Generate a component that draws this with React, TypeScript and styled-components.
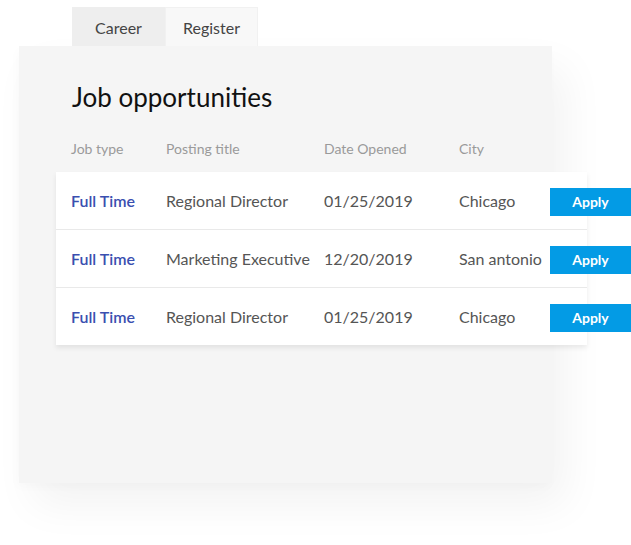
import React from "react";
import styled, { createGlobalStyle } from "styled-components";

const Global = createGlobalStyle`
  html, body { margin: 0; padding: 0; background: #ffffff; }
  body { font-family: Lato, "Open Sans", sans-serif; overflow: hidden; }
`;

const Page = styled.div`
  width: 631px;
  height: 545px;
  padding: 7px 0 0 19px;
  box-sizing: border-box;
  overflow: hidden;
`;

const Tabs = styled.div`
  display: flex;
  margin-left: 53px;
`;

const Tab = styled.div<{ $active?: boolean }>`
  width: 93px;
  height: 39px;
  display: flex;
  align-items: center;
  justify-content: center;
  font-size: 16px;
  color: #444;
  box-sizing: border-box;
  background: ${(p) => (p.$active ? "#eeeeee" : "#f8f8f8")};
  border: 1px solid ${(p) => (p.$active ? "#eeeeee" : "#f1f1f1")};
  border-bottom: none;
`;

const Panel = styled.div`
  width: 533px;
  height: 437px;
  background: #f5f5f5;
  box-shadow: 14px 22px 40px rgba(0, 0, 0, 0.05), -2px 4px 10px rgba(0, 0, 0, 0.02);
  padding: 35px 0 0 37px;
  box-sizing: border-box;
`;

const Title = styled.h1`
  margin: 0 0 0 16px;
  font-size: 26px;
  font-weight: 400;
  color: #111;
  line-height: 32px;
`;

const HeadRow = styled.div`
  display: grid;
  grid-template-columns: 95px 158px 135px auto;
  margin: 28px 0 0 15px;
  font-size: 14px;
  color: #9a9a9a;
  line-height: 16px;
`;

const Card = styled.div`
  width: 531px;
  margin-top: 15px;
  background: #fff;
  box-shadow: 0 3px 5px rgba(0, 0, 0, 0.08);
`;

const Row = styled.div`
  display: grid;
  grid-template-columns: 95px 158px 135px 91px 80px;
  align-items: center;
  height: 57px;
  padding-left: 15px;
  font-size: 16px;
  color: #555;
  & + & {
    border-top: 1px solid #e9e9e9;
  }
`;

const TypeCell = styled.span`
  color: #3a4fb0;
  font-weight: 600;
`;

const Cell = styled.span`
  white-space: nowrap;
`;

const ApplyButton = styled.button`
  height: 28px;
  width: 81px;
  margin-top: 2px;
  border: none;
  background: #039be5;
  color: #fff;
  font-family: inherit;
  font-size: 14px;
  font-weight: 700;
  padding: 0;
  cursor: pointer;
`;

const jobs = [
  { title: "Regional Director", date: "01/25/2019", city: "Chicago" },
  { title: "Marketing Executive", date: "12/20/2019", city: "San antonio" },
  { title: "Regional Director", date: "01/25/2019", city: "Chicago" },
];

export default function App() {
  return (
    <>
      <Global />
      <Page>
        <Tabs>
          <Tab $active>Career</Tab>
          <Tab>Register</Tab>
        </Tabs>
        <Panel>
          <Title>Job opportunities</Title>
          <HeadRow>
            <span>Job type</span>
            <span>Posting title</span>
            <span>Date Opened</span>
            <span>City</span>
          </HeadRow>
          <Card>
            {jobs.map((j, i) => (
              <Row key={i}>
                <TypeCell>Full Time</TypeCell>
                <Cell>{j.title}</Cell>
                <Cell>{j.date}</Cell>
                <Cell>{j.city}</Cell>
                <ApplyButton>Apply</ApplyButton>
              </Row>
            ))}
          </Card>
        </Panel>
      </Page>
    </>
  );
}
